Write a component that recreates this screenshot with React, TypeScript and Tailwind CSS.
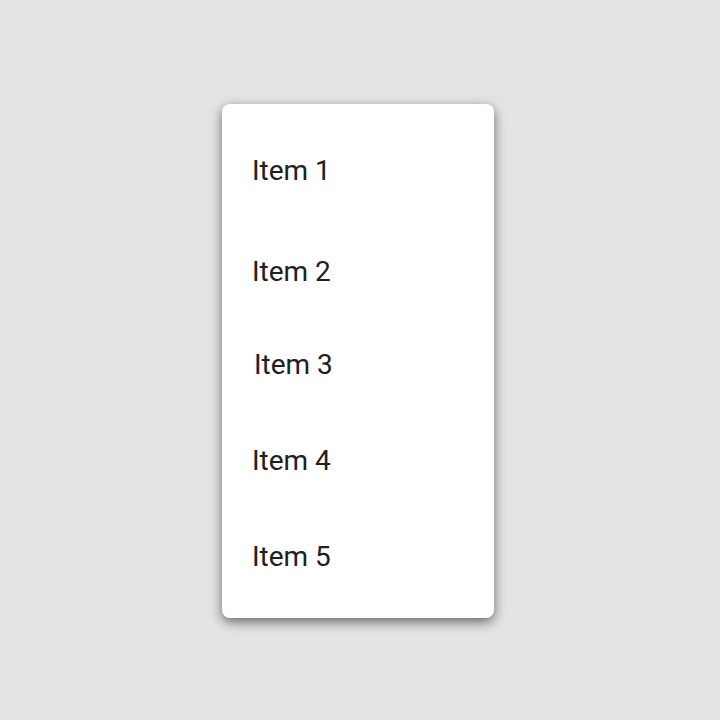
const items = [
  { label: 'Item 1', cls: 'mt-[51px] ml-[30px]' },
  { label: 'Item 2', cls: 'mt-[69px] ml-[30px]' },
  { label: 'Item 3', cls: 'mt-[61px] ml-[32px]' },
  { label: 'Item 4', cls: 'mt-[64px] ml-[30px]' },
  { label: 'Item 5', cls: 'mt-[64px] ml-[30px]' },
]

export default function App() {
  return (
    <div
      className="w-[720px] h-[720px] bg-[#e4e4e4] flex items-center justify-center"
      style={{ fontFamily: 'Roboto, "Noto Sans", sans-serif' }}
    >
      <div className="w-[272px] h-[514px] mr-[4px] mt-[2px] bg-white rounded-lg shadow-[0_4px_12px_rgba(0,0,0,0.55)] flex flex-col">
        {items.map((item) => (
          <div key={item.label} className={`${item.cls} h-[32px] leading-[32px] text-[28px] text-[#212121]`}>
            {item.label}
          </div>
        ))}
      </div>
    </div>
  )
}
